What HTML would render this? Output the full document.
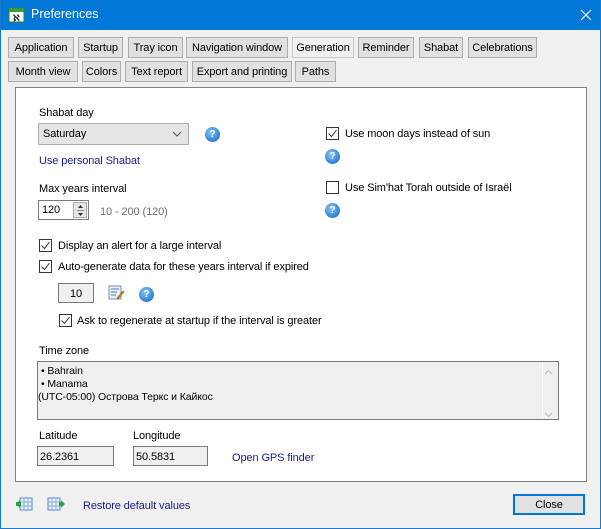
<!DOCTYPE html>
<html><head><meta charset="utf-8"><style>
*{box-sizing:border-box;margin:0;padding:0}
body{width:601px;height:529px;overflow:hidden;background:#f0f0f0;font-family:"Liberation Sans",sans-serif;font-size:11px;letter-spacing:-0.1px;color:#000;position:relative}
.a{position:absolute;white-space:nowrap}
.t{position:absolute;white-space:nowrap;margin-top:2px}
.win{position:absolute;left:0;top:0;width:601px;height:529px;border:1px solid #1979ca;border-top:none}
.title{position:absolute;left:0;top:0;width:601px;height:30px;background:#0078d7;color:#fff;font-size:12.5px;letter-spacing:0}
.tab{position:absolute;height:21px;background:#e1e1e1;border:1px solid #adadad;text-align:center;line-height:20px}
.sel{background:#f0f0f0;border-color:#c8c8c8}
.panel{position:absolute;left:15px;top:87px;width:572px;height:395px;background:#fff;border:1px solid #828282}
.cb{position:absolute;width:13px;height:13px;border:1px solid #333;background:#fff}
.cb svg{position:absolute;left:0;top:0}
.help{position:absolute;width:15px;height:15px;border-radius:50%;background:radial-gradient(circle at 40% 35%,#8cc4f5,#2a7fd4 70%,#1d5fa8);color:#fff;font-size:10px;font-weight:bold;text-align:center;line-height:15px;letter-spacing:0}
.link{color:#1a1a8c}
.box{position:absolute;border:1px solid #7a7a7a;background:#f0f0f0}
</style></head><body>
<div class="title">
 <svg class="a" style="left:8px;top:6px" width="17" height="17"><rect x="1" y="2" width="15" height="14" fill="#fff" stroke="#2e7d32"/><rect x="1" y="2" width="15" height="4" fill="#3a9b3e"/><text x="5" y="15" font-size="9" font-weight="bold" fill="#222" font-family="Liberation Sans">ℵ</text></svg>
 <div class="a" style="left:31px;top:7px">Preferences</div>
 <svg class="a" style="left:580px;top:9px" width="12" height="12"><path d="M1 1L11 11M11 1L1 11" stroke="#fff" stroke-width="1.2"/></svg>
</div>
<div class="win"></div>

<div class="tab" style="left:8px;top:37px;width:66px">Application</div>
<div class="tab" style="left:78px;top:37px;width:45px">Startup</div>
<div class="tab" style="left:128px;top:37px;width:55px">Tray icon</div>
<div class="tab" style="left:186px;top:37px;width:102px">Navigation window</div>
<div class="tab sel" style="left:292px;top:37px;width:62px">Generation</div>
<div class="tab" style="left:358px;top:37px;width:56px">Reminder</div>
<div class="tab" style="left:419px;top:37px;width:44px">Shabat</div>
<div class="tab" style="left:468px;top:37px;width:69px">Celebrations</div>
<div class="tab" style="left:8px;top:61px;width:70px">Month view</div>
<div class="tab" style="left:82px;top:61px;width:39px">Colors</div>
<div class="tab" style="left:125px;top:61px;width:63px">Text report</div>
<div class="tab" style="left:192px;top:61px;width:100px">Export and printing</div>
<div class="tab" style="left:295px;top:61px;width:41px">Paths</div>

<div class="panel"></div>

<div class="t" style="left:39px;top:105px">Shabat day</div>
<div class="a" style="left:38px;top:123px;width:151px;height:22px;background:#e5e5e5;border:1px solid #adadad"><span class="a" style="left:4px;top:4px">Saturday</span><svg class="a" style="left:133px;top:7px" width="10" height="6"><path d="M1 1L5 5L9 1" stroke="#555" fill="none"/></svg></div>
<div class="help" style="left:205px;top:127px">?</div>
<div class="t link" style="left:39px;top:153px">Use personal Shabat</div>

<div class="t" style="left:39px;top:181px">Max years interval</div>
<div class="a" style="left:38px;top:200px;width:51px;height:20px;border:1px solid #7a7a7a;background:#fff"><span class="a" style="left:3px;top:3px">120</span><div class="a" style="left:34px;top:1px;width:14px;height:16px;background:#e5e5e5;border:1px solid #adadad"><svg class="a" style="left:3px;top:1px" width="7" height="13"><path d="M3.5 1L6 4H1Z M1 9H6L3.5 12Z" fill="#333"/><path d="M0 6.5H7" stroke="#888"/></svg></div></div>
<div class="t" style="left:100px;top:204px;color:#6d6d6d">10 - 200 (120)</div>

<div class="cb" style="left:39px;top:239px"><svg width="11" height="11"><path d="M1.5 5.5L4.5 8.5L9.5 2" stroke="#333" fill="none"/></svg></div>
<div class="t" style="left:58px;top:238px">Display an alert for a large interval</div>
<div class="cb" style="left:39px;top:260px"><svg width="11" height="11"><path d="M1.5 5.5L4.5 8.5L9.5 2" stroke="#333" fill="none"/></svg></div>
<div class="t" style="left:58px;top:259px">Auto-generate data for these years interval if expired</div>
<div class="box" style="left:58px;top:283px;width:36px;height:20px"><span class="a" style="left:11px;top:4px">10</span></div>
<svg class="a" style="left:108px;top:285px" width="17" height="16"><rect x="1" y="1" width="12" height="13" fill="#e8eef8" stroke="#7a8fb0"/><path d="M3 4H11M3 7H9M3 10H8" stroke="#4a7fc0"/><path d="M9 13L15 6L16 7L10 14Z" fill="#e0a030" stroke="#8a5a10" stroke-width=".6"/></svg>
<div class="help" style="left:139px;top:287px">?</div>
<div class="cb" style="left:59px;top:314px"><svg width="11" height="11"><path d="M1.5 5.5L4.5 8.5L9.5 2" stroke="#333" fill="none"/></svg></div>
<div class="t" style="left:77px;top:313px">Ask to regenerate at startup if the interval is greater</div>

<div class="cb" style="left:326px;top:127px"><svg width="11" height="11"><path d="M1.5 5.5L4.5 8.5L9.5 2" stroke="#333" fill="none"/></svg></div>
<div class="t" style="left:345px;top:126px">Use moon days instead of sun</div>
<div class="help" style="left:325px;top:149px">?</div>
<div class="cb" style="left:326px;top:181px"></div>
<div class="t" style="left:345px;top:180px">Use Sim'hat Torah outside of Israël</div>
<div class="help" style="left:325px;top:203px">?</div>

<div class="t" style="left:39px;top:343px">Time zone</div>
<div class="box" style="left:37px;top:361px;width:522px;height:59px;line-height:13px;font-size:10.5px">
 <div class="a" style="left:3px;top:3px">• Bahrain<br>• Manama<br><span style="margin-left:-3px">(UTC-05:00) Острова Теркс и Кайкос</span></div>
 <div class="a" style="right:0;top:0;width:16px;height:57px;border-left:1px solid #fff"></div>
 <svg class="a" style="left:506px;top:7px" width="9" height="50"><path d="M1 5L4.5 1.5L8 5M1 44L4.5 47.5L8 44" stroke="#bbb" fill="none"/></svg>
</div>

<div class="t" style="left:39px;top:428px">Latitude</div>
<div class="t" style="left:133px;top:428px">Longitude</div>
<div class="box" style="left:37px;top:446px;width:77px;height:20px"><span class="a" style="left:2px;top:4px">26.2361</span></div>
<div class="box" style="left:133px;top:446px;width:75px;height:20px"><span class="a" style="left:2px;top:4px">50.5831</span></div>
<div class="t link" style="left:232px;top:450px">Open GPS finder</div>

<svg class="a" style="left:15px;top:497px" width="19" height="14"><rect x="5" y="1" width="12" height="12" fill="#e6f0fa" stroke="#5a8ac0"/><path d="M5 5H17M5 9H17M9 1V13M13 1V13" stroke="#8ab0d8"/><path d="M1 7L5 3V11Z" fill="#2ea043"/><rect x="1" y="5" width="5" height="4" fill="#2ea043"/></svg>
<svg class="a" style="left:47px;top:497px" width="19" height="14"><rect x="1" y="1" width="12" height="12" fill="#e6f0fa" stroke="#5a8ac0"/><path d="M1 5H13M1 9H13M5 1V13M9 1V13" stroke="#8ab0d8"/><path d="M18 7L14 3V11Z" fill="#2ea043"/><rect x="12" y="5" width="3" height="4" fill="#2ea043"/></svg>
<div class="t link" style="left:83px;top:498px">Restore default values</div>

<div class="a" style="left:513px;top:494px;width:72px;height:21px;background:#e1e1e1;border:2px solid #0078d7;text-align:center;line-height:18px">Close</div>
</body></html>
